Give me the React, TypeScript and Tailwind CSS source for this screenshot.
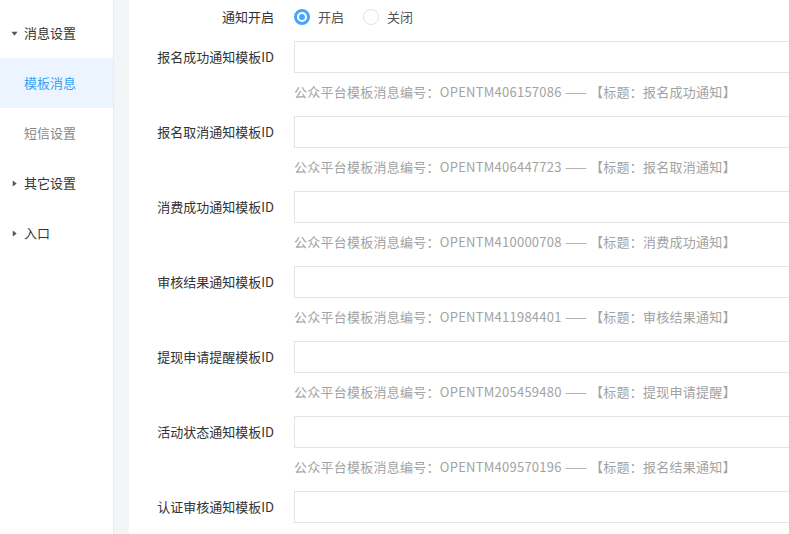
import React, { useState } from 'react';

const rows = [
  { label: '报名成功通知模板ID', code: 'OPENTM406157086', title: '报名成功通知' },
  { label: '报名取消通知模板ID', code: 'OPENTM406447723', title: '报名取消通知' },
  { label: '消费成功通知模板ID', code: 'OPENTM410000708', title: '消费成功通知' },
  { label: '审核结果通知模板ID', code: 'OPENTM411984401', title: '审核结果通知' },
  { label: '提现申请提醒模板ID', code: 'OPENTM205459480', title: '提现申请提醒' },
  { label: '活动状态通知模板ID', code: 'OPENTM409570196', title: '报名结果通知' },
  { label: '认证审核通知模板ID' },
];

const Caret = ({ open }: { open?: boolean }) => (
  <svg
    className={open ? 'w-[7px] h-[7px] text-[#555]' : 'w-[7px] h-[7px] text-[#555] -rotate-90'}
    viewBox="0 0 8 8"
  >
    <path d="M0.5 2h7L4 6.5z" fill="currentColor" />
  </svg>
);

const Radio = ({ checked, label, onClick }: { checked: boolean; label: string; onClick: () => void }) => (
  <label className="flex items-center cursor-pointer" onClick={onClick}>
    <span
      className={
        checked
          ? 'w-[16px] h-[16px] rounded-full border-[3px] border-[#46a6ff] bg-white flex items-center justify-center'
          : 'w-[16px] h-[16px] rounded-full border border-[#e3e3e3] bg-white'
      }
    >
      {checked && <span className="w-[6px] h-[6px] rounded-full bg-[#46a6ff]" />}
    </span>
    <span className="ml-[8px] text-[13px] text-[#555]">{label}</span>
  </label>
);

const App = () => {
  const [enabled, setEnabled] = useState(true);

  return (
    <div className="flex w-[789px] h-[534px] overflow-hidden bg-white font-['Noto_Sans_CJK_SC','Noto_Sans',sans-serif]">
      {/* sidebar */}
      <div className="w-[114px] shrink-0 border-r border-[#ebebeb] pt-[8px] text-[13px]">
        <div className="h-[50px] flex items-center pl-[11px] text-[#333]">
          <Caret open />
          <span className="ml-[6px]">消息设置</span>
        </div>
        <div className="h-[50px] flex items-center pl-[24px] bg-[#ecf5ff] text-[#36a3f7]">模板消息</div>
        <div className="h-[50px] flex items-center pl-[24px] text-[#888]">短信设置</div>
        <div className="h-[50px] flex items-center pl-[11px] text-[#333]">
          <Caret />
          <span className="ml-[6px]">其它设置</span>
        </div>
        <div className="h-[50px] flex items-center pl-[11px] text-[#333]">
          <Caret />
          <span className="ml-[6px]">入口</span>
        </div>
      </div>
      <div className="w-[15px] shrink-0 bg-[#f4f5f7]" />

      {/* main */}
      <div className="flex-1 min-w-0 text-[13px]">
        <div className="flex items-center h-[34px]">
          <div className="w-[145px] text-right text-[#333]">通知开启</div>
          <div className="ml-[20px] flex items-center gap-[19px]">
            <Radio checked={enabled} label="开启" onClick={() => setEnabled(true)} />
            <Radio checked={!enabled} label="关闭" onClick={() => setEnabled(false)} />
          </div>
        </div>
        <div className="mt-[7px]">
          {rows.map((r) => (
            <div key={r.label}>
              <div className="flex items-center h-[32px]">
                <div className="w-[145px] shrink-0 text-right text-[#333] whitespace-nowrap">{r.label}</div>
                <input className="ml-[20px] w-[560px] shrink-0 h-[32px] border border-[#e4e4e4] outline-none px-2" />
              </div>
              {r.code && (
                <div className="pl-[165px] pt-[9px] pb-[14px] leading-[20px] text-[#a3a3a3] whitespace-nowrap tracking-[0.25px]">
                  公众平台模板消息编号：{r.code} —— 【标题：{r.title}】
                </div>
              )}
            </div>
          ))}
        </div>
      </div>
    </div>
  );
};

export default App;
